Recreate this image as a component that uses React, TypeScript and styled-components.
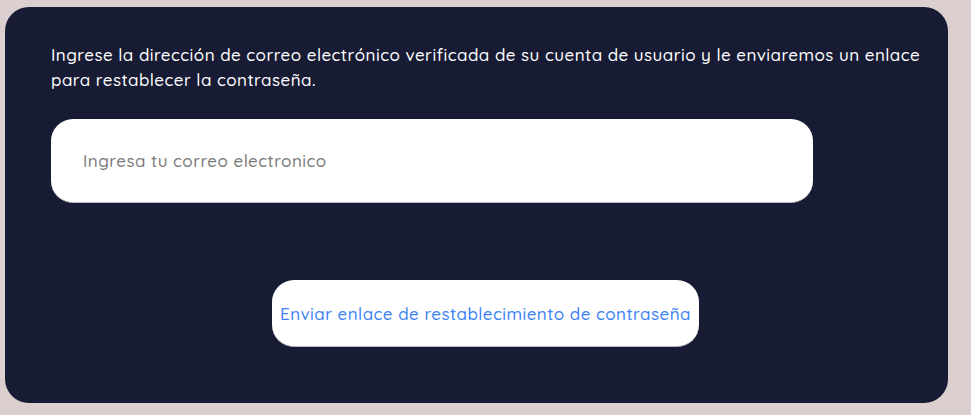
import React from "react";
import styled, { createGlobalStyle } from "styled-components";

const Global = createGlobalStyle`
  html, body { margin: 0; padding: 0; background: #dccfcf; }
  body { font-family: "Quicksand", "Lato", "Noto Sans", sans-serif; }
  * { box-sizing: border-box; }
`;

const Page = styled.div`
  padding: 7px 23px 12px 5px;
`;

const Card = styled.div`
  background: #171b33;
  border-radius: 24px;
  padding: 35px 22px 56px 46px;
  display: flex;
  flex-direction: column;
`;

const Intro = styled.p`
  margin: 0 0 27px 0;
  color: #ffffff;
  font-size: 17px;
  font-weight: 500;
  line-height: 25px;
  letter-spacing: 0.45px;
`;

const Input = styled.input`
  flex-shrink: 0;
  width: 762px;
  height: 84px;
  border: none;
  border-bottom: 1px solid #b8b8c0;
  border-radius: 22px;
  background: #ffffff;
  padding: 0 32px;
  font-family: inherit;
  font-size: 17px;
  font-weight: 500;
  letter-spacing: 0.45px;
  color: #333;
  outline: none;
  &::placeholder { color: #7a7a7a; }
`;

const Actions = styled.div`
  margin-top: 77px;
  margin-right: 6px;
  display: flex;
  justify-content: center;
`;

const Button = styled.button`
  height: 67px;
  padding: 0 8px;
  border: none;
  border-bottom: 1px solid #b8b8c0;
  border-radius: 22px;
  background: #ffffff;
  color: #3b82f6;
  font-family: inherit;
  font-size: 17px;
  font-weight: 500;
  letter-spacing: 0.45px;
  cursor: pointer;
`;

export default function App() {
  return (
    <>
      <Global />
      <Page>
        <Card>
          <Intro>
            Ingrese la dirección de correo electrónico verificada de su cuenta de usuario y le enviaremos un enlace para restablecer la contraseña.
          </Intro>
          <Input type="email" placeholder="Ingresa tu correo electronico" />
          <Actions>
            <Button>Enviar enlace de restablecimiento de contraseña</Button>
          </Actions>
        </Card>
      </Page>
    </>
  );
}
